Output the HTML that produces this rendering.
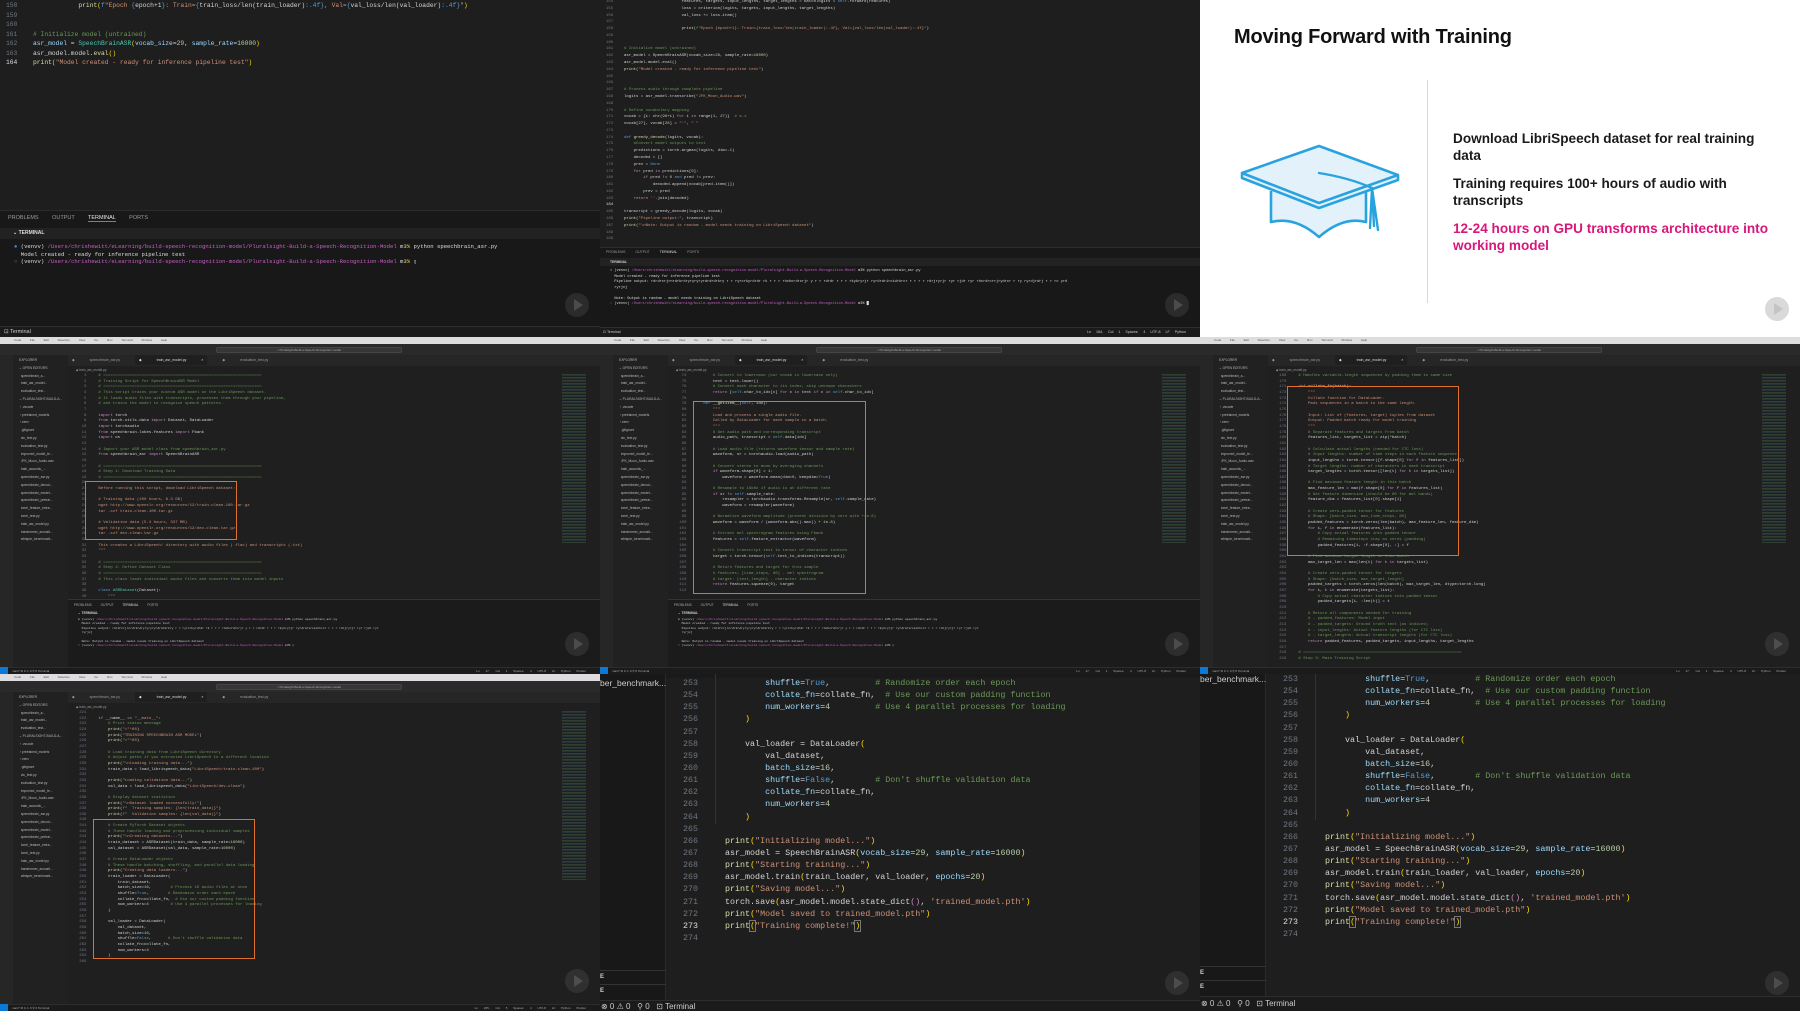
<!DOCTYPE html>
<html><head><meta charset="utf-8">
<style>
*{margin:0;padding:0;box-sizing:border-box}
body{width:1800px;height:1011px;background:#1a1a1a;position:relative;overflow:hidden;font-family:"Liberation Sans",sans-serif}
.cell{position:absolute;width:600px;height:337px;overflow:hidden;background:#1f1f1f}
.abs{position:absolute}
pre{font-family:"Liberation Mono",monospace;white-space:pre;margin:0}
.c{color:#6a9955}.s{color:#ce9178}.k{color:#569cd6}.f{color:#dcdcaa}.v{color:#9cdcfe}.n{color:#b5cea8}.y{color:#ffd700}.p{color:#c586c0}.m{color:#c95fc9}
.play{position:absolute;width:24px;height:24px;border-radius:50%;background:rgba(90,90,90,.3);right:11px;bottom:11px}
.play:after{content:"";position:absolute;left:9px;top:6px;border-left:9px solid rgba(150,150,150,.3);border-top:6px solid transparent;border-bottom:6px solid transparent}
.mb{left:0;top:0;width:600px;height:7px;background:#dedcdf;font-size:3px;color:#555;padding-left:14px;line-height:7px;word-spacing:8px}
.tb{left:0;top:7px;width:600px;height:11px;background:#2a2a2a}
.srch{left:216px;top:9.5px;width:186px;height:6px;background:#363636;border:1px solid #444;border-radius:2px;font-size:3px;color:#aaa;text-align:center;line-height:4px}
.act{left:0;top:18px;width:13px;height:312px;background:#262626}
.side{left:13px;top:18px;width:55px;height:312px;background:#212121;font-size:3.3px;color:#b8b8b8;line-height:7.8px;padding:2px 0 0 6px}
.tabs{left:68px;top:18px;width:532px;height:11px;background:#262626;font-size:3.5px;color:#999;line-height:11px;padding-left:4px;word-spacing:14px}
.crumb{left:68px;top:29px;width:532px;height:8px;font-size:3.2px;color:#999;line-height:8px;padding-left:8px}
.code{left:72px;top:37px;font-size:4px;line-height:5.65px;color:#d4d4d4}
.ln{color:#6e7681}
.mini-map{right:14px;top:36px;width:24px;height:170px;background:repeating-linear-gradient(#1f1f1f 0 1px,#3c5a3c 1px 2px,#2f3f50 2px 3px);opacity:.55}
.panel{left:68px;top:262px;width:532px;height:68px;background:#1b1b1b;border-top:1px solid #333;font-size:3.2px;color:#aaa}
.sb{left:0;bottom:0;width:600px;height:7px;background:#1b1b1b;border-top:1px solid #2d2d2d;font-size:3px;color:#aaa;line-height:6px;padding-left:12px}
.sbb{left:0;bottom:0;width:8px;height:7px;background:#0a7ad8}
.obox{position:absolute;border:1.5px solid #e0702e}
.bcode{font-size:8.35px;line-height:12.14px;color:#d4d4d4}
.bln{color:#6e7681;text-align:right}
</style></head><body>

<div class="cell" style="left:0;top:0;background:#1e1e1e">
 <pre class="abs" style="left:6px;top:1px;font-size:6.3px;line-height:9.5px;color:#6e7681">158
159
160
161
162
163
<span style="color:#ddd">164</span></pre>
 <pre class="abs" style="left:33px;top:1px;font-size:6.3px;line-height:9.5px;color:#d4d4d4">            <span class="f">print</span><span class="y">(</span><span class="k">f</span><span class="s">"Epoch </span><span class="k">{</span>epoch+1<span class="k">}</span><span class="s">: Train=</span><span class="k">{</span>train_loss/len(train_loader)<span class="k">:.4f}</span><span class="s">, Val=</span><span class="k">{</span>val_loss/len(val_loader)<span class="k">:.4f}</span><span class="s">"</span><span class="y">)</span>


<span class="c"># Initialize model (untrained)</span>
<span class="v">asr_model</span> = <span style="color:#4ec9b0">SpeechBrainASR</span><span class="y">(</span><span class="v">vocab_size</span>=<span class="n">29</span>, <span class="v">sample_rate</span>=<span class="n">16000</span><span class="y">)</span>
asr_model.model.<span class="f">eval</span><span class="y">()</span>
<span class="f">print</span><span class="y">(</span><span class="s">"Model created - ready for inference pipeline test"</span><span class="y">)</span></pre>
 <div class="abs" style="left:0;top:210px;width:600px;height:117px;background:#181818;border-top:1px solid #2b2b2b"></div>
 <div class="abs" style="left:8px;top:215px;font-size:5.5px;color:#999;word-spacing:12px">PROBLEMS OUTPUT <span style="color:#e6e6e6;border-bottom:1px solid #3b8eea">TERMINAL</span> PORTS</div>
 <div class="abs" style="left:0;top:228px;width:600px;height:11px;background:#222"></div>
 <div class="abs" style="left:13px;top:230px;font-size:5px;color:#ddd;font-weight:bold">⌄ TERMINAL</div>
 <pre class="abs" style="left:14px;top:243px;font-size:5.6px;line-height:7.6px;color:#ddd"><span style="color:#3b8eea">●</span> (venvv) <span class="m">/Users/chrishewitt/eLearning/build-speech-recognition-model/Pluralsight-Build-a-Speech-Recognition-Model</span> m3<span class="y">%</span> python speechbrain_asr.py
  Model created - ready for inference pipeline test
<span style="color:#777">○</span> (venvv) <span class="m">/Users/chrishewitt/eLearning/build-speech-recognition-model/Pluralsight-Build-a-Speech-Recognition-Model</span> m3<span class="y">%</span> ▯</pre>
 <div class="abs" style="left:0;top:326px;width:600px;height:11px;background:#1b1b1b;border-top:1px solid #2d2d2d;font-size:5.5px;color:#ccc;padding:2px 0 0 4px">⊡ Terminal</div>
 <div class="play" style="bottom:20px"></div>
</div>

<div class="cell" style="left:600px;top:0;background:#1e1e1e">
 <pre class="abs ln" style="left:6px;top:-1px;font-size:4px;line-height:6.78px">154
155
156
157
158
159
160
161
162
163
164
165
166
167
168
169
170
171
172
173
174
175
176
177
178
179
180
181
182
183
<span style="color:#ddd">184</span>
185
186
187
188
189</pre>
 <pre class="abs" style="left:24px;top:-1px;font-size:4px;line-height:6.78px;color:#d4d4d4">                        features, targets, input_lengths, target_lengths = batchlogits = <span class="k">self</span>.forward(features)
                        loss = criterion(logits, targets, input_lengths, target_lengths)
                        val_loss += loss.item()

                        <span class="f">print</span>(<span class="k">f</span><span class="s">"Epoch {epoch+1}: Train={train_loss/len(train_loader):.4f}, Val={val_loss/len(val_loader):.4f}"</span>)


<span class="c"># Initialize model (untrained)</span>
asr_model = SpeechBrainASR(vocab_size=<span class="n">29</span>, sample_rate=<span class="n">16000</span>)
asr_model.model.eval()
<span class="f">print</span>(<span class="s">"Model created - ready for inference pipeline test"</span>)


<span class="c"># Process audio through complete pipeline</span>
logits = asr_model.transcribe(<span class="s">"JFK_Moon_Audio.wav"</span>)

<span class="c"># Define vocabulary mapping</span>
vocab = {i: chr(<span class="n">96</span>+i) <span class="p">for</span> i <span class="p">in</span> range(<span class="n">1</span>, <span class="n">27</span>)}  <span class="c"># a-z</span>
vocab[<span class="n">27</span>], vocab[<span class="n">28</span>] = <span class="s">"'"</span>, <span class="s">" "</span>

<span class="k">def</span> <span class="f">greedy_decode</span>(logits, vocab):
    <span class="c">#Convert model outputs to text</span>
    predictions = torch.argmax(logits, dim=-<span class="n">1</span>)
    decoded = []
    prev = <span class="k">None</span>
    <span class="p">for</span> pred <span class="p">in</span> predictions[<span class="n">0</span>]:
        <span class="p">if</span> pred != <span class="n">0</span> <span class="k">and</span> pred != prev:
            decoded.append(vocab[pred.item()])
        prev = pred
    <span class="p">return</span> <span class="s">''</span>.join(decoded)

transcript = greedy_decode(logits, vocab)
<span class="f">print</span>(<span class="s">"Pipeline output:"</span>, transcript)
<span class="f">print</span>(<span class="s">"\nNote: Output is random - model needs training on LibriSpeech dataset"</span>)</pre>
 <div class="abs" style="left:0;top:247px;width:600px;height:80px;background:#181818;border-top:1px solid #2b2b2b"></div>
 <div class="abs" style="left:6px;top:250px;font-size:3.5px;color:#999;word-spacing:9px">PROBLEMS OUTPUT <span style="color:#ddd">TERMINAL</span> PORTS</div>
 <div class="abs" style="left:0;top:258px;width:600px;height:8px;background:#222;font-size:3.3px;color:#ccc;padding:2px 0 0 10px;font-weight:bold">TERMINAL</div>
 <pre class="abs" style="left:10px;top:269px;font-size:3.6px;line-height:5.5px;color:#ddd"><span style="color:#3b8eea">●</span> (venvv) <span class="m">/Users/chrishewitt/eLearning/build-speech-recognition-model/Pluralsight-Build-a-Speech-Recognition-Model</span> m3% python speechbrain_asr.py
  Model created - ready for inference pipeline test
  Pipeline output: rdrdrcrjrnrdrkrdryryryryrdrdrdrkry r r ryrcrkyrdrdr rk r r r rhchcrdrcrjr y r r rdrdr r r r rkykryrjr ryrdrdrircidrkrcr r r r r rdrjryrjr ryr rjdr ryr rhcrdrcrrjrydrcr r ry ryrdjrdrj r r rc yrd
  ryrjcj

  Note: Output is random - model needs training on LibriSpeech dataset
<span style="color:#777">○</span> (venvv) <span class="m">/Users/chrishewitt/eLearning/build-speech-recognition-model/Pluralsight-Build-a-Speech-Recognition-Model</span> m3% █</pre>
 <div class="abs" style="left:0;top:327px;width:600px;height:10px;background:#1b1b1b;border-top:1px solid #2d2d2d;font-size:3.6px;color:#ccc;padding:2px 0 0 3px">⊡ Terminal<span style="position:absolute;left:487px;word-spacing:4px">Ln 184, Col 1  Spaces: 4  UTF-8  LF  Python</span></div>
 <div class="play" style="bottom:20px"></div>
</div>

<div class="cell" style="left:1200px;top:0;background:#fff">
 <div class="abs" style="left:34px;top:26px;font-size:20px;font-weight:bold;color:#111;letter-spacing:-.2px">Moving Forward with Training</div>
 <div class="abs" style="left:227px;top:80px;width:1px;height:223px;background:#d8d8d8"></div>
 <svg class="abs" style="left:38px;top:144px" width="164" height="98" viewBox="-2 -2 164 98">
  <path d="M31 45 L31 76 Q55 70 79 91 Q103 70 126 76 L126 45" fill="#e3f1fb" stroke="#29a3e0" stroke-width="2.6" stroke-linejoin="round"/>
  <path d="M2 27 L79 0 L158 29 L158 34 L79 62 L2 32 Z" fill="#e3f1fb" stroke="#29a3e0" stroke-width="2.6" stroke-linejoin="round"/>
  <path d="M2 27 L79 57 L158 29" fill="none" stroke="#29a3e0" stroke-width="2.6" stroke-linejoin="round"/>
  <path d="M79 27 Q110 32 132 42 L134 80 M132 42 L138 84 M132 42 L130 82" fill="none" stroke="#29a3e0" stroke-width="2.4" stroke-linecap="round"/>
 </svg>
 <div class="abs" style="left:253px;top:130px;width:318px;font-size:13.6px;font-weight:bold;color:#1a1a1a;line-height:17px">Download LibriSpeech dataset for real training data</div>
 <div class="abs" style="left:253px;top:175px;width:318px;font-size:13.6px;font-weight:bold;color:#1a1a1a;line-height:17px">Training requires 100+ hours of audio with transcripts</div>
 <div class="abs" style="left:253px;top:220px;width:345px;font-size:13.6px;font-weight:bold;color:#d8177b;line-height:17px">12-24 hours on GPU transforms architecture into working model</div>
 <div class="play" style="bottom:16px;background:rgba(160,160,160,.4)"></div>
</div>

<div class="cell" style="left:0;top:337px">
 <div class="abs mb">  Code File Edit Selection View Go Run Terminal Window Help</div>
 <div class="abs tb"></div><div class="abs srch">⌕ Pluralsight-Build-a-Speech-Recognition-model</div>
 <div class="abs act"></div>
 <div class="abs side">EXPLORER<br>⌄ OPEN EDITORS<br>&nbsp; speechbrain_a...<br>&nbsp; train_asr_model...<br>&nbsp; evaluation_test...<br>⌄ PLURALSIGHT-BUILD-A...<br>&nbsp;› .vscode<br>&nbsp;› pretrained_models<br>&nbsp;› venv<br>&nbsp; .gitignore<br>&nbsp; ctc_test.py<br>&nbsp; evaluation_test.py<br>&nbsp; improved_model_te...<br>&nbsp; JFK_Moon_Audio.wav<br>&nbsp; train_acoustic_...<br>&nbsp; speechbrain_asr.py<br>&nbsp; speechbrain_decod...<br>&nbsp; speechbrain_model...<br>&nbsp; speechbrain_pretrai...<br>&nbsp; torch_feature_extra...<br>&nbsp; torch_test.py<br>&nbsp; train_asr_model.py<br>&nbsp; transformer_acousti...<br>&nbsp; whisper_benchmark...</div>
 <div class="abs tabs">◆ speechbrain_asr.py <span style="background:#1f1f1f;color:#ddd;padding:3px 4px">◆ train_asr_model.py ×</span> ◆ evaluation_test.py</div>
 <div class="abs crumb">◆ train_asr_model.py</div>
 <pre class="abs code"><span class="ln">     1   </span><span class="c">  # ==================================================================</span>
<span class="ln">     2   </span><span class="c">  # Training Script for SpeechBrainASR Model</span>
<span class="ln">     3   </span><span class="c">  # ==================================================================</span>
<span class="ln">     4   </span><span class="c">  # This script trains your custom ASR model on the LibriSpeech dataset.</span>
<span class="ln">     5   </span><span class="c">  # It loads audio files with transcripts, processes them through your pipeline,</span>
<span class="ln">     6   </span><span class="c">  # and trains the model to recognize speech patterns.</span>
<span class="ln">     7   </span>
<span class="ln">     8   </span>  <span class="p">import</span> torch
<span class="ln">     9   </span>  <span class="p">from</span> torch.utils.data <span class="p">import</span> Dataset, DataLoader
<span class="ln">    10   </span>  <span class="p">import</span> torchaudio
<span class="ln">    11   </span>  <span class="p">from</span> speechbrain.lobes.features <span class="p">import</span> Fbank
<span class="ln">    12   </span>  <span class="p">import</span> os
<span class="ln">    13   </span>
<span class="ln">    14   </span><span class="c">  # Import your ASR model class from speechbrain_asr.py</span>
<span class="ln">    15   </span>  <span class="p">from</span> speechbrain_asr <span class="p">import</span> SpeechBrainASR
<span class="ln">    16   </span>
<span class="ln">    17   </span><span class="c">  # ==================================================================</span>
<span class="ln">    18   </span><span class="c">  # Step 1: Download Training Data</span>
<span class="ln">    19   </span><span class="c">  # ==================================================================</span>
<span class="ln">    20   </span>
<span class="ln">    21   </span><span class="s">  Before running this script, download LibriSpeech dataset:</span>
<span class="ln">    22   </span>
<span class="ln">    23   </span><span class="s">  # Training data (100 hours, 6.3 GB)</span>
<span class="ln">    24   </span><span class="s">  wget http://www.openslr.org/resources/12/train-clean-100.tar.gz</span>
<span class="ln">    25   </span><span class="s">  tar -xzf train-clean-100.tar.gz</span>
<span class="ln">    26   </span>
<span class="ln">    27   </span><span class="s">  # Validation data (5.4 hours, 337 MB)</span>
<span class="ln">    28   </span><span class="s">  wget http://www.openslr.org/resources/12/dev-clean.tar.gz</span>
<span class="ln">    29   </span><span class="s">  tar -xzf dev-clean.tar.gz</span>
<span class="ln">    30   </span>
<span class="ln">    31   </span><span class="s">  This creates a LibriSpeech/ directory with audio files (.flac) and transcripts (.txt)</span>
<span class="ln">    32   </span><span class="s">  """</span>
<span class="ln">    33   </span>
<span class="ln">    34   </span><span class="c">  # ==================================================================</span>
<span class="ln">    35   </span><span class="c">  # Step 2: Define Dataset Class</span>
<span class="ln">    36   </span><span class="c">  # ==================================================================</span>
<span class="ln">    37   </span><span class="c">  # This class loads individual audio files and converts them into model inputs</span>
<span class="ln">    38   </span>
<span class="ln">    39   </span>  <span class="k">class</span> <span style="color:#4ec9b0">ASRDataset</span>(Dataset):
<span class="ln">    40   </span>      <span class="s">"""</span></pre>
 <div class="abs mini-map"></div>
 <div class="abs panel"><div style="padding:3px 0 0 6px;word-spacing:8px">PROBLEMS OUTPUT <span style="color:#ddd">TERMINAL</span> PORTS</div><div style="padding:4px 0 0 10px;font-weight:bold;color:#ccc">⌄ TERMINAL</div>
 <pre style="font-size:3px;line-height:4.4px;color:#ccc;padding:3px 0 0 10px">● (venvv) <span class="m">/Users/chrishewitt/eLearning/build-speech-recognition-model/Pluralsight-Build-a-Speech-Recognition-Model</span> m3% python speechbrain_asr.py
  Model created - ready for inference pipeline test
  Pipeline output: rdrdrcrjrnrdrkrdryryryryrdrdrdrkry r r ryrcrkyrdrdr rk r r r rhchcrdrcrjr y r r rdrdr r r r rkykryrjr ryrdrdrircidrkrcr r r r rdrjryrjr ryr rjdr ryr
  ryrjcj

  Note: Output is random - model needs training on LibriSpeech dataset
○ (venvv) <span class="m">/Users/chrishewitt/eLearning/build-speech-recognition-model/Pluralsight-Build-a-Speech-Recognition-Model</span> m3% ▯</pre></div>
 <div class="abs sb">main*  ⊗ 0 ⚠ 0  ⚲ 0  Terminal<span style="position:absolute;right:14px;word-spacing:5px">Ln 17, Col 1 Spaces: 4 UTF-8 LF Python Prettier</span></div><div class="abs sbb"></div>
 <div class="play" style="bottom:18px"></div>
</div>
<div class="obox" style="left:85px;top:481px;width:152px;height:59px"></div>

<div class="cell" style="left:600px;top:337px">
 <div class="abs mb">  Code File Edit Selection View Go Run Terminal Window Help</div>
 <div class="abs tb"></div><div class="abs srch">⌕ Pluralsight-Build-a-Speech-Recognition-model</div>
 <div class="abs act"></div>
 <div class="abs side">EXPLORER<br>⌄ OPEN EDITORS<br>&nbsp; speechbrain_a...<br>&nbsp; train_asr_model...<br>&nbsp; evaluation_test...<br>⌄ PLURALSIGHT-BUILD-A...<br>&nbsp;› .vscode<br>&nbsp;› pretrained_models<br>&nbsp;› venv<br>&nbsp; .gitignore<br>&nbsp; ctc_test.py<br>&nbsp; evaluation_test.py<br>&nbsp; improved_model_te...<br>&nbsp; JFK_Moon_Audio.wav<br>&nbsp; train_acoustic_...<br>&nbsp; speechbrain_asr.py<br>&nbsp; speechbrain_decod...<br>&nbsp; speechbrain_model...<br>&nbsp; speechbrain_pretrai...<br>&nbsp; torch_feature_extra...<br>&nbsp; torch_test.py<br>&nbsp; train_asr_model.py<br>&nbsp; transformer_acousti...<br>&nbsp; whisper_benchmark...</div>
 <div class="abs tabs">◆ speechbrain_asr.py <span style="background:#1f1f1f;color:#ddd;padding:3px 4px">◆ train_asr_model.py ×</span> ◆ evaluation_test.py</div>
 <div class="abs crumb">◆ train_asr_model.py</div>
 <pre class="abs code"><span class="ln">    74   </span><span class="c">        # Convert to lowercase (our vocab is lowercase only)</span>
<span class="ln">    75   </span>        text = text.lower()
<span class="ln">    76   </span><span class="c">        # Convert each character to its index, skip unknown characters</span>
<span class="ln">    77   </span>        <span class="p">return</span> [<span class="k">self</span>.char_to_idx[c] <span class="p">for</span> c <span class="p">in</span> text <span class="p">if</span> c <span class="p">in</span> <span class="k">self</span>.char_to_idx]
<span class="ln">    78   </span>
<span class="ln">    79   </span>    <span class="k">def</span> <span class="f">__getitem__</span>(<span class="k">self</span>, idx):
<span class="ln">    80   </span><span class="s">        """</span>
<span class="ln">    81   </span><span class="s">        Load and process a single audio file.</span>
<span class="ln">    82   </span><span class="s">        Called by DataLoader for each sample in a batch.</span>
<span class="ln">    83   </span><span class="s">        """</span>
<span class="ln">    84   </span><span class="c">        # Get audio path and corresponding transcript</span>
<span class="ln">    85   </span>        audio_path, transcript = <span class="k">self</span>.data[idx]
<span class="ln">    86   </span>
<span class="ln">    87   </span><span class="c">        # Load audio file (returns waveform tensor and sample rate)</span>
<span class="ln">    88   </span>        waveform, sr = torchaudio.load(audio_path)
<span class="ln">    89   </span>
<span class="ln">    90   </span><span class="c">        # Convert stereo to mono by averaging channels</span>
<span class="ln">    91   </span>        <span class="p">if</span> waveform.shape[<span class="n">0</span>] > <span class="n">1</span>:
<span class="ln">    92   </span>            waveform = waveform.mean(dim=<span class="n">0</span>, keepdim=<span class="k">True</span>)
<span class="ln">    93   </span>
<span class="ln">    94   </span><span class="c">        # Resample to 16kHz if audio is at different rate</span>
<span class="ln">    95   </span>        <span class="p">if</span> sr != <span class="k">self</span>.sample_rate:
<span class="ln">    96   </span>            resampler = torchaudio.transforms.Resample(sr, <span class="k">self</span>.sample_rate)
<span class="ln">    97   </span>            waveform = resampler(waveform)
<span class="ln">    98   </span>
<span class="ln">    99   </span><span class="c">        # Normalize waveform amplitude (prevent division by zero with +1e-8)</span>
<span class="ln">   100   </span>        waveform = waveform / (waveform.abs().max() + <span class="n">1e-8</span>)
<span class="ln">   101   </span>
<span class="ln">   102   </span><span class="c">        # Extract mel spectrogram features using Fbank</span>
<span class="ln">   103   </span>        features = <span class="k">self</span>.feature_extractor(waveform)
<span class="ln">   104   </span>
<span class="ln">   105   </span><span class="c">        # Convert transcript text to tensor of character indices</span>
<span class="ln">   106   </span>        target = torch.tensor(<span class="k">self</span>.text_to_indices(transcript))
<span class="ln">   107   </span>
<span class="ln">   108   </span><span class="c">        # Return features and target for this sample</span>
<span class="ln">   109   </span><span class="c">        # features: [time_steps, 80] - mel spectrogram</span>
<span class="ln">   110   </span><span class="c">        # target: [text_length] - character indices</span>
<span class="ln">   111   </span>        <span class="p">return</span> features.squeeze(<span class="n">0</span>), target
<span class="ln">   112   </span></pre>
 <div class="abs mini-map"></div>
 <div class="abs panel"><div style="padding:3px 0 0 6px;word-spacing:8px">PROBLEMS OUTPUT <span style="color:#ddd">TERMINAL</span> PORTS</div><div style="padding:4px 0 0 10px;font-weight:bold;color:#ccc">⌄ TERMINAL</div>
 <pre style="font-size:3px;line-height:4.4px;color:#ccc;padding:3px 0 0 10px">● (venvv) <span class="m">/Users/chrishewitt/eLearning/build-speech-recognition-model/Pluralsight-Build-a-Speech-Recognition-Model</span> m3% python speechbrain_asr.py
  Model created - ready for inference pipeline test
  Pipeline output: rdrdrcrjrnrdrkrdryryryryrdrdrdrkry r r ryrcrkyrdrdr rk r r r rhchcrdrcrjr y r r rdrdr r r r rkykryrjr ryrdrdrircidrkrcr r r r rdrjryrjr ryr rjdr ryr
  ryrjcj

  Note: Output is random - model needs training on LibriSpeech dataset
○ (venvv) <span class="m">/Users/chrishewitt/eLearning/build-speech-recognition-model/Pluralsight-Build-a-Speech-Recognition-Model</span> m3% ▯</pre></div>
 <div class="abs sb">main*  ⊗ 0 ⚠ 0  ⚲ 0  Terminal<span style="position:absolute;right:14px;word-spacing:5px">Ln 17, Col 1 Spaces: 4 UTF-8 LF Python Prettier</span></div><div class="abs sbb"></div>
 <div class="play" style="bottom:18px"></div>
</div>
<div class="obox" style="left:693px;top:401px;width:173px;height:193px"></div>

<div class="cell" style="left:1200px;top:337px">
 <div class="abs mb">  Code File Edit Selection View Go Run Terminal Window Help</div>
 <div class="abs tb"></div><div class="abs srch">⌕ Pluralsight-Build-a-Speech-Recognition-model</div>
 <div class="abs act"></div>
 <div class="abs side">EXPLORER<br>⌄ OPEN EDITORS<br>&nbsp; speechbrain_a...<br>&nbsp; train_asr_model...<br>&nbsp; evaluation_test...<br>⌄ PLURALSIGHT-BUILD-A...<br>&nbsp;› .vscode<br>&nbsp;› pretrained_models<br>&nbsp;› venv<br>&nbsp; .gitignore<br>&nbsp; ctc_test.py<br>&nbsp; evaluation_test.py<br>&nbsp; improved_model_te...<br>&nbsp; JFK_Moon_Audio.wav<br>&nbsp; train_acoustic_...<br>&nbsp; speechbrain_asr.py<br>&nbsp; speechbrain_decod...<br>&nbsp; speechbrain_model...<br>&nbsp; speechbrain_pretrai...<br>&nbsp; torch_feature_extra...<br>&nbsp; torch_test.py<br>&nbsp; train_asr_model.py<br>&nbsp; transformer_acousti...<br>&nbsp; whisper_benchmark...</div>
 <div class="abs tabs">◆ speechbrain_asr.py <span style="background:#1f1f1f;color:#ddd;padding:3px 4px">◆ train_asr_model.py ×</span> ◆ evaluation_test.py</div>
 <div class="abs crumb">◆ train_asr_model.py</div>
 <pre class="abs code"><span class="ln">   169   </span><span class="c">  # Handles variable-length sequences by padding them to same size</span>
<span class="ln">   170   </span>
<span class="ln">   171   </span>  <span class="k">def</span> <span class="f">collate_fn</span>(batch):
<span class="ln">   172   </span><span class="s">      """</span>
<span class="ln">   173   </span><span class="s">      Collate function for DataLoader.</span>
<span class="ln">   174   </span><span class="s">      Pads sequences in a batch to the same length.</span>
<span class="ln">   175   </span>
<span class="ln">   176   </span><span class="s">      Input: List of (features, target) tuples from dataset</span>
<span class="ln">   177   </span><span class="s">      Output: Padded batch ready for model training</span>
<span class="ln">   178   </span><span class="s">      """</span>
<span class="ln">   179   </span><span class="c">      # Separate features and targets from batch</span>
<span class="ln">   180   </span>      features_list, targets_list = zip(*batch)
<span class="ln">   181   </span>
<span class="ln">   182   </span><span class="c">      # Calculate actual lengths (needed for CTC loss)</span>
<span class="ln">   183   </span><span class="c">      # Input lengths: number of time steps in each feature sequence</span>
<span class="ln">   184   </span>      input_lengths = torch.tensor([f.shape[<span class="n">0</span>] <span class="p">for</span> f <span class="p">in</span> features_list])
<span class="ln">   185   </span><span class="c">      # Target lengths: number of characters in each transcript</span>
<span class="ln">   186   </span>      target_lengths = torch.tensor([len(t) <span class="p">for</span> t <span class="p">in</span> targets_list])
<span class="ln">   187   </span>
<span class="ln">   188   </span><span class="c">      # Find maximum feature length in this batch</span>
<span class="ln">   189   </span>      max_feature_len = max(f.shape[<span class="n">0</span>] <span class="p">for</span> f <span class="p">in</span> features_list)
<span class="ln">   190   </span><span class="c">      # Get feature dimension (should be 80 for mel bands)</span>
<span class="ln">   191   </span>      feature_dim = features_list[<span class="n">0</span>].shape[<span class="n">1</span>]
<span class="ln">   192   </span>
<span class="ln">   193   </span><span class="c">      # Create zero-padded tensor for features</span>
<span class="ln">   194   </span><span class="c">      # Shape: [batch_size, max_time_steps, 80]</span>
<span class="ln">   195   </span>      padded_features = torch.zeros(len(batch), max_feature_len, feature_dim)
<span class="ln">   196   </span>      <span class="p">for</span> i, f <span class="p">in</span> enumerate(features_list):
<span class="ln">   197   </span><span class="c">          # Copy actual features into padded tensor</span>
<span class="ln">   198   </span><span class="c">          # Remaining timesteps stay as zeros (padding)</span>
<span class="ln">   199   </span>          padded_features[i, :f.shape[<span class="n">0</span>], :] = f
<span class="ln">   200   </span>
<span class="ln">   201   </span><span class="c">      # Find maximum target length in this batch</span>
<span class="ln">   202   </span>      max_target_len = max(len(t) <span class="p">for</span> t <span class="p">in</span> targets_list)
<span class="ln">   203   </span>
<span class="ln">   204   </span><span class="c">      # Create zero-padded tensor for targets</span>
<span class="ln">   205   </span><span class="c">      # Shape: [batch_size, max_target_length]</span>
<span class="ln">   206   </span>      padded_targets = torch.zeros(len(batch), max_target_len, dtype=torch.long)
<span class="ln">   207   </span>      <span class="p">for</span> i, t <span class="p">in</span> enumerate(targets_list):
<span class="ln">   208   </span><span class="c">          # Copy actual character indices into padded tensor</span>
<span class="ln">   209   </span>          padded_targets[i, :len(t)] = t
<span class="ln">   210   </span>
<span class="ln">   211   </span><span class="c">      # Return all components needed for training</span>
<span class="ln">   212   </span><span class="c">      # - padded_features: Model input</span>
<span class="ln">   213   </span><span class="c">      # - padded_targets: Ground truth text (as indices)</span>
<span class="ln">   214   </span><span class="c">      # - input_lengths: Actual feature lengths (for CTC loss)</span>
<span class="ln">   215   </span><span class="c">      # - target_lengths: Actual transcript lengths (for CTC loss)</span>
<span class="ln">   216   </span>      <span class="p">return</span> padded_features, padded_targets, input_lengths, target_lengths
<span class="ln">   217   </span>
<span class="ln">   218   </span><span class="c">  # ==================================================================</span>
<span class="ln">   219   </span><span class="c">  # Step 3: Main Training Script</span></pre>
 <div class="abs mini-map"></div>
 <div class="abs sb">main*  ⊗ 0 ⚠ 0  ⚲ 0  Terminal<span style="position:absolute;right:14px;word-spacing:5px">Ln 17, Col 1 Spaces: 4 UTF-8 LF Python Prettier</span></div><div class="abs sbb"></div>
 <div class="play" style="bottom:18px"></div>
</div>
<div class="obox" style="left:1287px;top:386px;width:172px;height:170px"></div>

<div class="cell" style="left:0;top:674px">
 <div class="abs mb">  Code File Edit Selection View Go Run Terminal Window Help</div>
 <div class="abs tb"></div><div class="abs srch">⌕ Pluralsight-Build-a-Speech-Recognition-model</div>
 <div class="abs act"></div>
 <div class="abs side">EXPLORER<br>⌄ OPEN EDITORS<br>&nbsp; speechbrain_a...<br>&nbsp; train_asr_model...<br>&nbsp; evaluation_test...<br>⌄ PLURALSIGHT-BUILD-A...<br>&nbsp;› .vscode<br>&nbsp;› pretrained_models<br>&nbsp;› venv<br>&nbsp; .gitignore<br>&nbsp; ctc_test.py<br>&nbsp; evaluation_test.py<br>&nbsp; improved_model_te...<br>&nbsp; JFK_Moon_Audio.wav<br>&nbsp; train_acoustic_...<br>&nbsp; speechbrain_asr.py<br>&nbsp; speechbrain_decod...<br>&nbsp; speechbrain_model...<br>&nbsp; speechbrain_pretrai...<br>&nbsp; torch_feature_extra...<br>&nbsp; torch_test.py<br>&nbsp; train_asr_model.py<br>&nbsp; transformer_acousti...<br>&nbsp; whisper_benchmark...</div>
 <div class="abs tabs">◆ speechbrain_asr.py <span style="background:#1f1f1f;color:#ddd;padding:3px 4px">◆ train_asr_model.py ×</span> ◆ evaluation_test.py</div>
 <div class="abs crumb">◆ train_asr_model.py</div>
 <pre class="abs code"><span class="ln">   221   </span>
<span class="ln">   222   </span>  <span class="p">if</span> __name__ == <span class="s">"__main__"</span>:
<span class="ln">   223   </span><span class="c">      # Print status message</span>
<span class="ln">   224   </span>      <span class="f">print</span>(<span class="s">"="*60</span>)
<span class="ln">   225   </span>      <span class="f">print</span>(<span class="s">"TRAINING SPEECHBRAIN ASR MODEL"</span>)
<span class="ln">   226   </span>      <span class="f">print</span>(<span class="s">"="*60</span>)
<span class="ln">   227   </span>
<span class="ln">   228   </span><span class="c">      # Load training data from LibriSpeech directory</span>
<span class="ln">   229   </span><span class="c">      # Adjust paths if you extracted LibriSpeech to a different location</span>
<span class="ln">   230   </span>      <span class="f">print</span>(<span class="s">"\nLoading training data..."</span>)
<span class="ln">   231   </span>      train_data = load_librispeech_data(<span class="s">"LibriSpeech/train-clean-100"</span>)
<span class="ln">   232   </span>
<span class="ln">   233   </span>      <span class="f">print</span>(<span class="s">"Loading validation data..."</span>)
<span class="ln">   234   </span>      val_data = load_librispeech_data(<span class="s">"LibriSpeech/dev-clean"</span>)
<span class="ln">   235   </span>
<span class="ln">   236   </span><span class="c">      # Display dataset statistics</span>
<span class="ln">   237   </span>      <span class="f">print</span>(<span class="s">"\nDataset loaded successfully!"</span>)
<span class="ln">   238   </span>      <span class="f">print</span>(<span class="k">f</span><span class="s">"  Training samples: {len(train_data)}"</span>)
<span class="ln">   239   </span>      <span class="f">print</span>(<span class="k">f</span><span class="s">"  Validation samples: {len(val_data)}"</span>)
<span class="ln">   240   </span>
<span class="ln">   241   </span><span class="c">      # Create PyTorch Dataset objects</span>
<span class="ln">   242   </span><span class="c">      # These handle loading and preprocessing individual samples</span>
<span class="ln">   243   </span>      <span class="f">print</span>(<span class="s">"\nCreating datasets..."</span>)
<span class="ln">   244   </span>      train_dataset = ASRDataset(train_data, sample_rate=<span class="n">16000</span>)
<span class="ln">   245   </span>      val_dataset = ASRDataset(val_data, sample_rate=<span class="n">16000</span>)
<span class="ln">   246   </span>
<span class="ln">   247   </span><span class="c">      # Create DataLoader objects</span>
<span class="ln">   248   </span><span class="c">      # These handle batching, shuffling, and parallel data loading</span>
<span class="ln">   249   </span>      <span class="f">print</span>(<span class="s">"Creating data loaders..."</span>)
<span class="ln">   250   </span>      train_loader = DataLoader(
<span class="ln">   251   </span>          train_dataset,
<span class="ln">   252   </span>          batch_size=<span class="n">16</span>,        <span class="c"># Process 16 audio files at once</span>
<span class="ln">   253   </span>          shuffle=<span class="k">True</span>,        <span class="c"># Randomize order each epoch</span>
<span class="ln">   254   </span>          collate_fn=collate_fn,  <span class="c"># Use our custom padding function</span>
<span class="ln">   255   </span>          num_workers=<span class="n">4</span>         <span class="c"># Use 4 parallel processes for loading</span>
<span class="ln">   256   </span>      )
<span class="ln">   257   </span>
<span class="ln">   258   </span>      val_loader = DataLoader(
<span class="ln">   259   </span>          val_dataset,
<span class="ln">   260   </span>          batch_size=<span class="n">16</span>,
<span class="ln">   261   </span>          shuffle=<span class="k">False</span>,       <span class="c"># Don't shuffle validation data</span>
<span class="ln">   262   </span>          collate_fn=collate_fn,
<span class="ln">   263   </span>          num_workers=<span class="n">4</span>
<span class="ln">   264   </span>      )
<span class="ln">   265   </span></pre>
 <div class="abs mini-map"></div>
 <div class="abs sb">main*  ⊗ 0 ⚠ 0  ⚲ 0  Terminal<span style="position:absolute;right:14px;word-spacing:5px">Ln 265, Col 5 Spaces: 4 UTF-8 LF Python Prettier</span></div><div class="abs sbb"></div>
 <div class="play" style="bottom:18px"></div>
</div>
<div class="obox" style="left:93px;top:819px;width:162px;height:140px"></div>

<div class="cell" style="left:600px;top:674px;background:#1e1e1e">
 <div class="abs" style="left:0;top:0;width:600px;height:4px;background:#1a1a1a"></div>
 <div class="abs" style="left:0;top:0;width:66px;height:326px;background:#181818;border-right:1px solid #2a2a2a"></div>
 <div class="abs" style="left:0;top:4px;font-size:8.5px;color:#ccc">ber_benchmark...</div>
 <div class="abs" style="left:0;top:296px;width:66px;height:1px;background:#333"></div>
 <div class="abs" style="left:0;top:310px;width:66px;height:1px;background:#333"></div>
 <div class="abs" style="left:0;top:300px;font-size:6px;color:#ccc;font-weight:bold">E</div>
 <div class="abs" style="left:0;top:314px;font-size:6px;color:#ccc;font-weight:bold">E</div>
 <div class="abs" style="left:115px;top:0;width:1px;height:150px;background:#333"></div>
 <pre class="abs bcode bln" style="left:76px;top:3px;width:22px">253
254
255
256
257
258
259
260
261
262
263
264
265
266
267
268
269
270
271
272
<span style="color:#ddd">273</span>
274</pre>
 <pre class="abs bcode" style="left:115px;top:3px">          <span class="v">shuffle</span>=<span class="k">True</span>,         <span class="c"># Randomize order each epoch</span>
          <span class="v">collate_fn</span>=collate_fn,  <span class="c"># Use our custom padding function</span>
          <span class="v">num_workers</span>=<span class="n">4</span>         <span class="c"># Use 4 parallel processes for loading</span>
      <span class="y">)</span>

      val_loader = DataLoader<span class="y">(</span>
          val_dataset,
          <span class="v">batch_size</span>=<span class="n">16</span>,
          <span class="v">shuffle</span>=<span class="k">False</span>,        <span class="c"># Don't shuffle validation data</span>
          <span class="v">collate_fn</span>=collate_fn,
          <span class="v">num_workers</span>=<span class="n">4</span>
      <span class="y">)</span>

  <span class="f">print</span><span class="y">(</span><span class="s">"Initializing model..."</span><span class="y">)</span>
  asr_model = SpeechBrainASR<span class="y">(</span><span class="v">vocab_size</span>=<span class="n">29</span>, <span class="v">sample_rate</span>=<span class="n">16000</span><span class="y">)</span>
  <span class="f">print</span><span class="y">(</span><span class="s">"Starting training..."</span><span class="y">)</span>
  asr_model.train<span class="y">(</span>train_loader, val_loader, <span class="v">epochs</span>=<span class="n">20</span><span class="y">)</span>
  <span class="f">print</span><span class="y">(</span><span class="s">"Saving model..."</span><span class="y">)</span>
  torch.save<span class="y">(</span>asr_model.model.state_dict<span class="p">()</span>, <span class="s">'trained_model.pth'</span><span class="y">)</span>
  <span class="f">print</span><span class="y">(</span><span class="s">"Model saved to trained_model.pth"</span><span class="y">)</span>
  <span class="f">print</span><span class="y" style="outline:1px solid #777">(</span><span class="s">"Training complete!"</span><span class="y" style="outline:1px solid #777">)</span>
</pre>
 <div class="abs" style="left:0;top:326px;width:600px;height:11px;background:#1b1b1b;border-top:1px solid #2d2d2d;font-size:8px;color:#ccc;padding:1px 0 0 1px;white-space:pre">⊗ 0 ⚠ 0   ⚲ 0   ⊡ Terminal</div>
 <div class="play" style="bottom:16px"></div>
</div>

<div class="cell" style="left:1200px;top:674px;background:#1e1e1e">
 <div class="abs" style="left:0;top:0;width:66px;height:326px;background:#181818;border-right:1px solid #2a2a2a"></div>
 <div class="abs" style="left:0;top:0;font-size:8.5px;color:#ccc">ber_benchmark...</div>
 <div class="abs" style="left:0;top:292px;width:66px;height:1px;background:#333"></div>
 <div class="abs" style="left:0;top:306px;width:66px;height:1px;background:#333"></div>
 <div class="abs" style="left:0;top:296px;font-size:6px;color:#ccc;font-weight:bold">E</div>
 <div class="abs" style="left:0;top:310px;font-size:6px;color:#ccc;font-weight:bold">E</div>
 <div class="abs" style="left:115px;top:0;width:1px;height:146px;background:#333"></div>
 <pre class="abs bcode bln" style="left:76px;top:-1px;width:22px">253
254
255
256
257
258
259
260
261
262
263
264
265
266
267
268
269
270
271
272
<span style="color:#ddd">273</span>
274</pre>
 <pre class="abs bcode" style="left:115px;top:-1px">          <span class="v">shuffle</span>=<span class="k">True</span>,         <span class="c"># Randomize order each epoch</span>
          <span class="v">collate_fn</span>=collate_fn,  <span class="c"># Use our custom padding function</span>
          <span class="v">num_workers</span>=<span class="n">4</span>         <span class="c"># Use 4 parallel processes for loading</span>
      <span class="y">)</span>

      val_loader = DataLoader<span class="y">(</span>
          val_dataset,
          <span class="v">batch_size</span>=<span class="n">16</span>,
          <span class="v">shuffle</span>=<span class="k">False</span>,        <span class="c"># Don't shuffle validation data</span>
          <span class="v">collate_fn</span>=collate_fn,
          <span class="v">num_workers</span>=<span class="n">4</span>
      <span class="y">)</span>

  <span class="f">print</span><span class="y">(</span><span class="s">"Initializing model..."</span><span class="y">)</span>
  asr_model = SpeechBrainASR<span class="y">(</span><span class="v">vocab_size</span>=<span class="n">29</span>, <span class="v">sample_rate</span>=<span class="n">16000</span><span class="y">)</span>
  <span class="f">print</span><span class="y">(</span><span class="s">"Starting training..."</span><span class="y">)</span>
  asr_model.train<span class="y">(</span>train_loader, val_loader, <span class="v">epochs</span>=<span class="n">20</span><span class="y">)</span>
  <span class="f">print</span><span class="y">(</span><span class="s">"Saving model..."</span><span class="y">)</span>
  torch.save<span class="y">(</span>asr_model.model.state_dict<span class="p">()</span>, <span class="s">'trained_model.pth'</span><span class="y">)</span>
  <span class="f">print</span><span class="y">(</span><span class="s">"Model saved to trained_model.pth"</span><span class="y">)</span>
  <span class="f">print</span><span class="y" style="outline:1px solid #777">(</span><span class="s">"Training complete!"</span><span class="y" style="outline:1px solid #777">)</span>
</pre>
 <div class="abs" style="left:0;top:322px;width:600px;height:15px;background:#1b1b1b;border-top:1px solid #2d2d2d;font-size:8px;color:#ccc;padding:2px 0 0 1px;white-space:pre">⊗ 0 ⚠ 0   ⚲ 0   ⊡ Terminal</div>
 <div class="play" style="bottom:16px"></div>
</div>

</body></html>
